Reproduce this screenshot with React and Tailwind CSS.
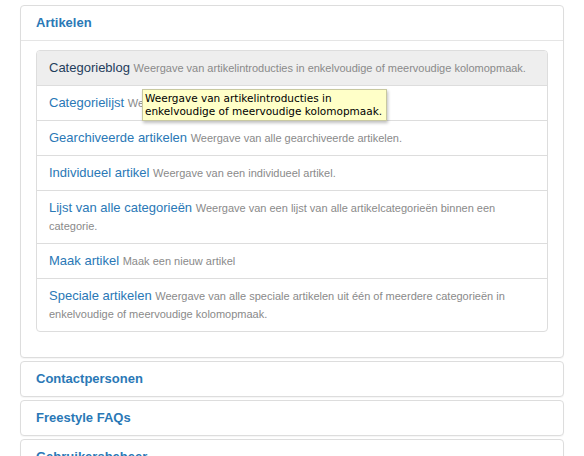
import React from "react";

const items = [
  { t: "Categorieblog", d: "Weergave van artikelintroducties in enkelvoudige of meervoudige kolomopmaak.", hover: true },
  { t: "Categorielijst", d: "Weergave van artikelen in een categorie." },
  { t: "Gearchiveerde artikelen", d: "Weergave van alle gearchiveerde artikelen." },
  { t: "Individueel artikel", d: "Weergave van een individueel artikel." },
  { t: "Lijst van alle categorieën", d: "Weergave van een lijst van alle artikelcategorieën binnen een categorie." },
  { t: "Maak artikel", d: "Maak een nieuw artikel" },
  { t: "Speciale artikelen", d: "Weergave van alle speciale artikelen uit één of meerdere categorieën in enkelvoudige of meervoudige kolomopmaak." },
];

function Panel({ title, children }) {
  return (
    <div className="border border-[#dddddd] rounded-[4px] bg-white shadow-[0_1px_1px_rgba(0,0,0,0.04)]">
      <div className="h-[34px] flex items-center px-[15px] text-[13px] font-bold text-[#2a78b6]">{title}</div>
      {children}
    </div>
  );
}

export default function App() {
  return (
    <div className="relative w-[584px] h-[456px] overflow-hidden bg-white" style={{ fontFamily: '"Liberation Sans", Arial, sans-serif' }}>
      <div className="px-[20px] pt-[5px] flex flex-col gap-[3px]">
        <Panel title="Artikelen">
          <div className="border-t border-[#e5e5e5] px-[15px] pt-[9px] pb-[25px]">
            <ul className="border border-[#dddddd] rounded-[4px] overflow-hidden">
              {items.map((it, i) => (
                <li
                  key={i}
                  className={`px-[12px] py-[8px] text-[13px] leading-[18px] ${i < items.length - 1 ? "border-b border-[#dddddd]" : ""} ${it.hover ? "bg-[#eeeeee]" : ""}`}
                >
                  <span className={it.hover ? "text-[#1f3d5c]" : "text-[#2a78b6]"}>{it.t}</span>{" "}
                  <span className="text-[11px] leading-[12px] text-[#8a8a8a]">{it.d}</span>
                </li>
              ))}
            </ul>
          </div>
        </Panel>
        <Panel title="Contactpersonen" />
        <Panel title="Freestyle FAQs" />
        <Panel title="Gebruikersbeheer" />
      </div>
      <div
        className="absolute left-[142px] top-[89px] w-[245px] h-[32px] whitespace-nowrap bg-[#ffffc8] border border-[#c8c8a0] shadow-[1px_2px_3px_rgba(0,0,0,0.25)] px-[2px] pt-[2px] text-[10.5px] leading-[13px] text-black"
        style={{ fontFamily: '"DejaVu Sans", Verdana, sans-serif' }}
      >
        Weergave van artikelintroducties in
        <br />
        enkelvoudige of meervoudige kolomopmaak.
      </div>
    </div>
  );
}
